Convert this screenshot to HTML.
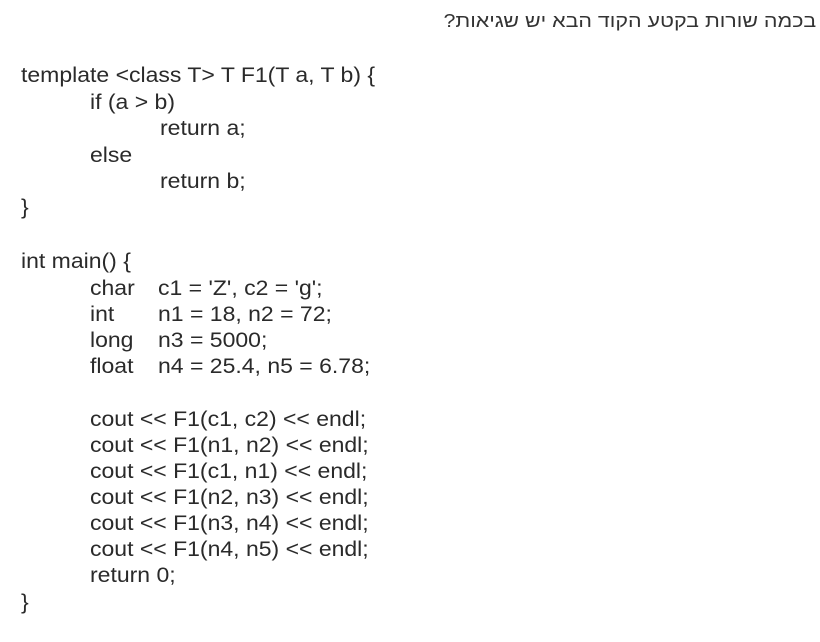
<!DOCTYPE html>
<html><head><meta charset="utf-8"><style>
html,body{margin:0;padding:0;background:#fff;width:820px;height:642px;overflow:hidden}
body{position:relative;font-family:"Liberation Sans",Arial,sans-serif;color:#2a2a2a}
.l{position:absolute;font-size:21px;line-height:20px;white-space:pre;transform:scaleX(1.095);transform-origin:0 0}
.h{position:absolute;right:4px;top:11px;font-size:18px;direction:rtl;white-space:nowrap;font-family:"Liberation Sans","DejaVu Sans",sans-serif;color:#333;transform:scaleX(1.19);transform-origin:100% 0}
</style></head><body>
<div class="h">בכמה שורות בקטע הקוד הבא יש שגיאות?</div>
<div class="l" style="left:21px;top:66px">template &lt;class T&gt; T F1(T a, T b) {</div>
<div class="l" style="left:90px;top:93px">if (a &gt; b)</div>
<div class="l" style="left:160px;top:119px">return a;</div>
<div class="l" style="left:90px;top:146px">else</div>
<div class="l" style="left:160px;top:172px">return b;</div>
<div class="l" style="left:21px;top:198px">}</div>
<div class="l" style="left:21px;top:252px">int main() {</div>
<div class="l" style="left:90px;top:279px">char</div><div class="l" style="left:158px;top:279px">c1 = 'Z', c2 = 'g';</div>
<div class="l" style="left:90px;top:305px">int</div><div class="l" style="left:158px;top:305px">n1 = 18, n2 = 72;</div>
<div class="l" style="left:90px;top:331px">long</div><div class="l" style="left:158px;top:331px">n3 = 5000;</div>
<div class="l" style="left:90px;top:357px">float</div><div class="l" style="left:158px;top:357px">n4 = 25.4, n5 = 6.78;</div>
<div class="l" style="left:90px;top:410px">cout &lt;&lt; F1(c1, c2) &lt;&lt; endl;</div>
<div class="l" style="left:90px;top:436px">cout &lt;&lt; F1(n1, n2) &lt;&lt; endl;</div>
<div class="l" style="left:90px;top:462px">cout &lt;&lt; F1(c1, n1) &lt;&lt; endl;</div>
<div class="l" style="left:90px;top:488px">cout &lt;&lt; F1(n2, n3) &lt;&lt; endl;</div>
<div class="l" style="left:90px;top:514px">cout &lt;&lt; F1(n3, n4) &lt;&lt; endl;</div>
<div class="l" style="left:90px;top:540px">cout &lt;&lt; F1(n4, n5) &lt;&lt; endl;</div>
<div class="l" style="left:90px;top:566px">return 0;</div>
<div class="l" style="left:21px;top:593px">}</div>
</body></html>
